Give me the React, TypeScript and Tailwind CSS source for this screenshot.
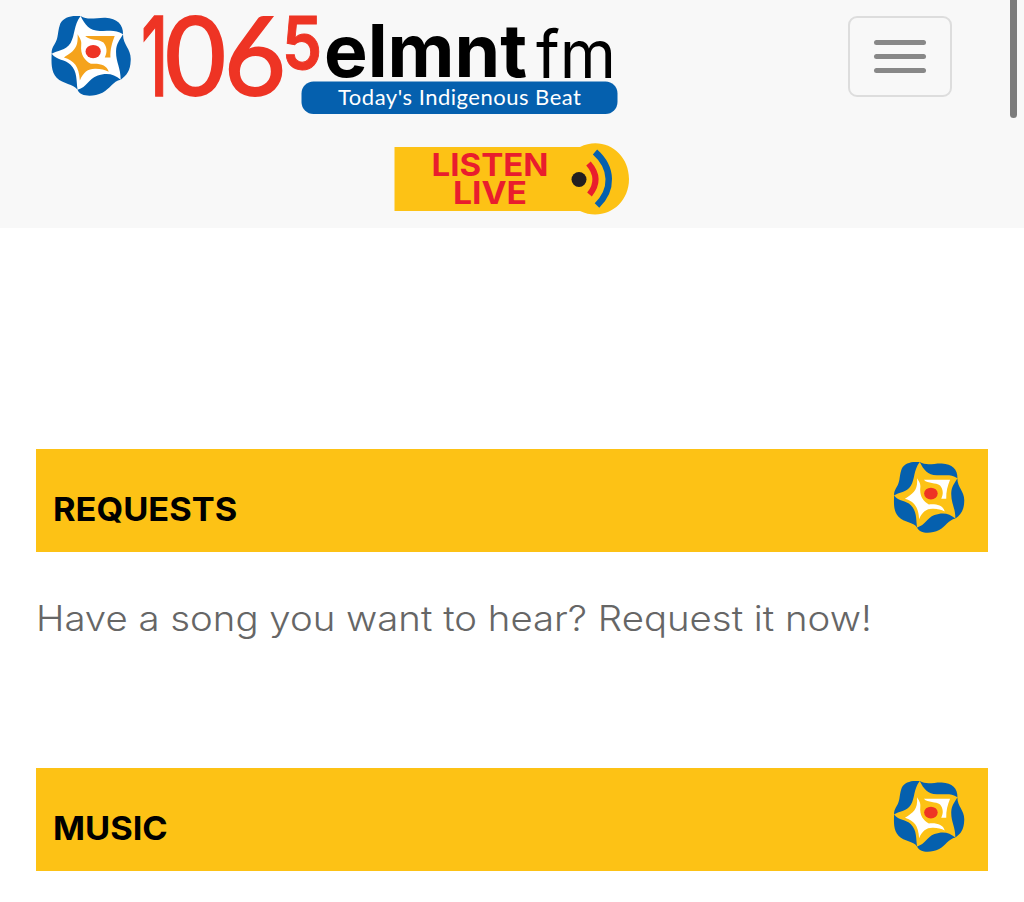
interface EmblemProps {
    className: string;
    backing?: string;
    star: string;
}

function Emblem({ className, backing, star }: EmblemProps) {
    return (
        <svg viewBox="33 33 241 241" className={className} aria-hidden="true">
            {backing && <path d="M122 33 L250 88 L243 225 L113 255 L35 147 Z" fill={backing} />}
            <g fill="#0560AE">
                <path d="M122 33 C94 30 65 38 59 62 C53 82 55 94 48 110 C40 126 34 132 35 147 C50 136 78 138 92 114 C106 90 101 61 122 33 Z" />
                <path d="M122 33 C145 47 170 37 197 38 C232 40 251 58 250 88 C226 72 205 80 180 78 C148 77 136 60 122 33 Z" />
                <path d="M250 88 C249 121 276 132 273 168 C272 198 261 212 243 225 C243 187 228 172 229 138 C230 116 239 107 250 88 Z" />
                <path d="M243 225 C219 230 212 251 188 264 C158 278 121 276 113 255 C142 247 145 224 172 213 C200 203 223 207 243 225 Z" />
                <path d="M113 255 C100 237 70 239 50 219 C33 201 34 174 35 147 C51 168 75 163 92 180 C113 201 109 228 113 255 Z" />
            </g>
            <g fill={star}>
                <path d="M113 88 C116 131 100 139 72 158 C103 168 117 184 120 227 C131 202 145 191 168 192 C182 192 196 195 207 201 C201 181 182 175 153 177 C134 166 121 149 124 120 C126 106 119 99 113 88 Z" />
                <path d="M136 93 L225 93 C217 113 211 133 212 158 L195 158 C203 143 202 126 191 113 C177 101 150 108 136 93 Z" />
            </g>
            <ellipse cx="160" cy="140" rx="23" ry="20" fill="#EE3424" />
        </svg>
    )
}

function Logo() {
    return (
        <div className="flex items-start">
            <Emblem className="mt-0.5 ml-px h-20 w-20" backing="#fff" star="#F5A31C" />
            <svg width="480" height="104" viewBox="140 14 480 104" className="ml-[9px] overflow-visible" role="img">
                <g fill="#EE3424">
                    <text x="141" y="96" fontSize="110" textLength="27" lengthAdjust="spacingAndGlyphs" stroke="#EE3424" strokeWidth="1.500" className="font-['Inter',sans-serif] font-medium">1</text>
                    <text x="165" y="95" fontSize="109" textLength="61" lengthAdjust="spacingAndGlyphs" stroke="#EE3424" strokeWidth="2" className="font-['Lato',sans-serif]">0</text>
                    <text x="224" y="95" fontSize="109" textLength="62" lengthAdjust="spacingAndGlyphs" stroke="#EE3424" strokeWidth="2" className="font-['Lato',sans-serif]">6</text>
                    <text x="282" y="69" fontSize="73" textLength="40" lengthAdjust="spacingAndGlyphs" stroke="#EE3424" strokeWidth="1" className="font-['Inter',sans-serif] font-semibold">5</text>
                </g>
                <text x="324" y="77" fontSize="73" textLength="203" lengthAdjust="spacingAndGlyphs" className="font-['Inter',sans-serif] font-bold">elmnt</text>
                <text x="536" y="78" fontSize="66" textLength="80" lengthAdjust="spacingAndGlyphs" className="font-['Inter',sans-serif] font-normal">fm</text>
                <rect x="301.500" y="81.500" width="316" height="32.500" rx="12" fill="#0560AE" />
                <text x="338" y="104.500" fontSize="22" fill="#fff" textLength="243" className="font-['Lato',sans-serif]">Today's Indigenous Beat</text>
            </svg>
        </div>
    )
}

function MenuButton() {
    return (
        <button aria-label="Menu" className="mt-0.5 flex h-[81px] w-[104px] flex-col items-center justify-center gap-[9.500px] rounded-[9px] border-2 border-[#ddd]">
            <span className="h-[4.800px] w-[52px] rounded-full bg-[#888]" />
            <span className="h-[4.800px] w-[52px] rounded-full bg-[#888]" />
            <span className="h-[4.800px] w-[52px] rounded-full bg-[#888]" />
        </button>
    )
}

function ListenLive() {
    return (
        <svg width="236" height="74" viewBox="394 142 236 74" className="overflow-visible" role="img">
            <path d="M394.500 147 H580 C603 135.500 629 152 629 179 C629 206 603 222 580 211 H394.500 Z" fill="#FDC215" />
            <g fill="#E91D2D" className="font-['Inter',sans-serif] font-bold">
                <text x="431.500" y="176" fontSize="31" textLength="117" lengthAdjust="spacingAndGlyphs">LISTEN</text>
                <text x="453" y="204" fontSize="31" textLength="74" lengthAdjust="spacingAndGlyphs">LIVE</text>
            </g>
            <circle cx="579" cy="179.500" r="7.500" fill="#231F20" />
            <path d="M588.500 163.500 Q602 179 589.500 194.500" fill="none" stroke="#E91D2D" strokeWidth="6" />
            <path d="M595 152 C613 168 613 190 597 205.500" fill="none" stroke="#0560AE" strokeWidth="6.500" />
        </svg>
    )
}

function SectionBanner({ title }: { title: string }) {
    return (
        <div className="flex h-[102.500px] items-start justify-between bg-[#FDC215] pt-3 pr-[23px] pl-[17px]">
            <h2 className="mt-[27px] origin-left scale-x-[1.042] font-['Inter',sans-serif] text-[33px] leading-[42px] font-bold text-black">{title}</h2>
            <Emblem className="mt-px h-[71px] w-[72px]" star="#fff" />
        </div>
    )
}

export default function App() {
    return (
        <div className="relative h-[902px] w-full overflow-hidden bg-white">
            <header className="flex h-[228px] flex-col bg-[#f8f8f8] pt-3.5">
                <div className="flex h-32 items-start justify-between pr-[72px] pl-[50px]">
                    <Logo />
                    <MenuButton />
                </div>
                <a className="self-center">
                    <ListenLive />
                </a>
            </header>
            <main className="px-9 pt-[221.200px]">
                <section className="h-[319px]">
                    <SectionBanner title="REQUESTS" />
                    <p className="mt-[42px] w-max origin-left scale-x-[1.096] font-['Inter',sans-serif] text-[35px] leading-[48px] font-light whitespace-nowrap text-[#666]">
                        Have a song you want to hear? Request it now!
                    </p>
                </section>
                <section>
                    <SectionBanner title="MUSIC" />
                </section>
            </main>
            <div className="absolute top-0 left-[1010px] h-[118px] w-[7px] rounded-b-full bg-[#7c7c7c]" />
        </div>
    )
}
